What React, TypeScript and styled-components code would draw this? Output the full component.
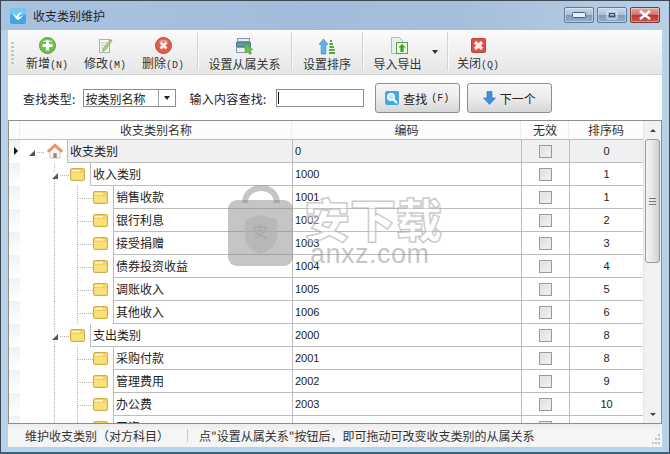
import React from "react";
import styled, { createGlobalStyle } from "styled-components";

const Global = createGlobalStyle`
  html, body { margin: 0; padding: 0; }
  body { font-family: "Noto Sans CJK SC", "Liberation Sans", sans-serif; font-size: 12px; color: #1c1c1c; }
  * { box-sizing: border-box; }
`;

const Win = styled.div`
  width: 670px; height: 454px; display: flex; flex-direction: column; overflow: hidden; position: relative;
  background: #b9d2ea;
  border: 1px solid #3d4a55; border-bottom: 2px solid #2c6a78;
`;
const TitleBar = styled.div`
  height: 29px; flex: none; display: flex; align-items: center; padding: 1px 9px 0 9px; gap: 7px;
  background: linear-gradient(90deg, #a9c3df 0%, #a3bcdb 45%, #a6bfdb 70%, #b9cfe6 100%);
`;
const TitleText = styled.div`
  flex: 1; font-size: 12px; line-height: 16px; color: #20272e;
`;
const Ctrl = styled.div<{ $close?: boolean }>`
  width: 30px; height: 16px; border: 1px solid ${p => p.$close ? "#7c3a36" : "#5f7b99"}; border-radius: 2px; display: flex; align-items: center; justify-content: center;
  background: ${p => p.$close
    ? "linear-gradient(180deg,#e5a79f 0%,#d0736a 48%,#b8382c 52%,#c9584a 100%)"
    : "linear-gradient(180deg,#c4d6ea 0%,#a9c0da 48%,#7f9cbc 52%,#94afcc 100%)"};
  box-shadow: inset 0 0 0 1px rgba(255,255,255,.35);
`;
const Ctrls = styled.div`display: flex; gap: 3px; margin-bottom: 2px;`;

const Body = styled.div`
  flex: 1; min-height: 0; margin: 0 7px 5px; display: flex; flex-direction: column; background: #fff;
`;
const Toolbar = styled.div`
  height: 45px; flex: none; display: flex; align-items: stretch; padding-left: 3px;
  background: linear-gradient(180deg, #fbfbfb 0%, #f0f0f0 50%, #e6e6e6 100%);
  border-bottom: 1px solid #d4d4d4;
`;
const Grip = styled.div`
  width: 3px; margin: 12px 4px 10px 0; flex: none;
  background: repeating-linear-gradient(180deg, #c6c6c6 0 2px, transparent 2px 4px);
`;
const Tool = styled.div<{ $w: number }>`
  width: ${p => p.$w}px; flex: none; display: flex; flex-direction: column; align-items: center; padding-top: 7px; position: relative;
`;
const ToolIcon = styled.div<{ $shift?: number }>`
  height: 18px; display: flex; align-items: center; justify-content: center; margin-right: ${p => p.$shift ?? 0}px;
`;
const ToolLabel = styled.div<{ $shift?: number }>`
  font-size: 12px; line-height: 16px; margin-top: 1px; white-space: nowrap; color: #333; margin-right: ${p => p.$shift ?? 0}px;
`;
const Hot = styled.span`font-family: "Liberation Mono", monospace; font-size: 10px;`;
const Sep = styled.div<{ $ml?: number }>`
  width: 1px; flex: none; margin: 2px 0 4px ${p => p.$ml ?? 0}px; background: #d2d2d2; box-shadow: 1px 0 0 #fafafa;
`;
const Caret = styled.span`
  position: absolute; right: 9px; top: 20px; width: 0; height: 0;
  border-left: 3px solid transparent; border-right: 3px solid transparent; border-top: 4px solid #333;
`;

const Search = styled.div`
  height: 45px; flex: none; display: flex; align-items: center; padding: 1px 0 0 15px; background: #fff;
`;
const Label = styled.div<{ $ml?: number }>`
  font-size: 12px; white-space: nowrap; color: #222; letter-spacing: .25px; margin-left: ${p => p.$ml ?? 0}px;
`;
const Combo = styled.div`
  width: 93px; height: 18px; margin-left: 7px; border: 1px solid #8c8c8c; display: flex; align-items: center; padding-left: 2px; font-size: 12px;
`;
const ComboText = styled.div`flex: 1;`;
const ComboBtn = styled.div`
  width: 17px; height: 16px; border-left: 1px solid #a0a0a0; display: flex; align-items: center; justify-content: center;
  &::after { content: ""; border-left: 3px solid transparent; border-right: 3px solid transparent; border-top: 4px solid #222; }
`;
const Input = styled.div`
  width: 88px; height: 18px; margin-left: 9px; border: 1px solid #8c8c8c; padding: 2px 0 0 1px;
  &::before { content: ""; display: block; width: 1px; height: 12px; background: #111; }
`;
const Btn = styled.div<{ $ml: number }>`
  width: 85px; height: 30px; margin-left: ${p => p.$ml}px; border: 1px solid #8e8e8e; border-radius: 3px; display: flex; align-items: center; justify-content: center; gap: 4px;
  background: linear-gradient(180deg,#f6f6f6 0%,#ececec 50%,#d6d6d6 100%); font-size: 12px; color: #222;
`;

const COLS = "11px 272px 229px 48px 74px";
const Table = styled.div`
  height: 304px; flex: none; display: flex; border: 1px solid #8d8d8d; background: #fff; position: relative; overflow: hidden;
`;
const Grid = styled.div`flex: 1; min-width: 0; overflow: hidden;`;
const Head = styled.div`
  height: 19px; display: grid; grid-template-columns: ${COLS}; border-bottom: 1px solid #bdbdbd;
  background: linear-gradient(180deg,#fff 0%,#fafafa 100%);
`;
const HeadCell = styled.div`
  text-align: center; font-size: 12px; line-height: 17px; color: #333; box-shadow: -1px 0 0 #f0f0f0;
`;
const Row = styled.div`
  height: 23px; display: grid; grid-template-columns: ${COLS};
`;
const Ind = styled.div<{ $on?: boolean }>`
  border-bottom: 1px solid #fff; display: flex; align-items: center; justify-content: center;
  background: linear-gradient(180deg,#f1f1f5 0%,#fff 100%);
  ${p => p.$on ? `&::after { content: ""; border-top: 4px solid transparent; border-bottom: 4px solid transparent; border-left: 4px solid #111; margin-left: 2px; }` : ""}
`;
const NameCell = styled.div`display: flex; position: relative; height: 23px;`;
const Gutter = styled.div<{ $w: number }>`width: ${p => p.$w}px; flex: none; position: relative; background: #fff;`;
const VGuide = styled.i<{ $x: number; $top?: number; $h?: number }>`
  position: absolute; left: ${p => p.$x}px; top: ${p => p.$top ?? 0}px; height: ${p => p.$h ?? 23}px; width: 1px;
  background: repeating-linear-gradient(180deg,#b5b5b5 0 1px,transparent 1px 2px);
`;
const HGuide = styled.i<{ $x: number; $w: number }>`
  position: absolute; left: ${p => p.$x}px; top: 12px; width: ${p => p.$w}px; height: 1px;
  background: repeating-linear-gradient(90deg,#b5b5b5 0 1px,transparent 1px 2px);
`;
const Expander = styled.i<{ $x: number }>`
  position: absolute; left: ${p => p.$x}px; top: 10px; width: 0; height: 0;
  border-bottom: 6px solid #555; border-left: 6px solid transparent;
`;
const NodeIcon = styled.span<{ $x: number }>`position: absolute; left: ${p => p.$x}px; top: 4px; display: flex;`;
const Cell = styled.div<{ $sel?: boolean; $flex?: boolean }>`
  border-left: 1px solid #bdbdbd; border-bottom: 1px solid #bdbdbd; background: ${p => p.$sel ? "#f0eff1" : "#fff"};
  font-size: 12px; line-height: 22px; color: #222; ${p => p.$flex ? "flex: 1;" : ""} padding-left: 2px; overflow: hidden; white-space: nowrap;
`;
const Code = styled(Cell)`font-family: "Liberation Sans", sans-serif; font-size: 11px; line-height: 23px;`;
const Sort = styled(Code)`text-align: center; padding-left: 0;`;
const CheckCell = styled(Cell)`display: flex; align-items: center; justify-content: center; padding-left: 0;`;
const Check = styled.span`
  width: 13px; height: 13px; border: 1px solid #9a9a9a; background: linear-gradient(135deg,#dcdcdc,#f4f4f4); box-shadow: inset 0 0 0 1px #e9e9e9;
`;

const Scroll = styled.div`
  width: 18px; flex: none; display: flex; flex-direction: column; background: #f1f1f1; border-left: 1px solid #e4e4e4;
`;
const ScrollBtn = styled.div<{ $up?: boolean }>`
  height: 18px; flex: none; display: flex; align-items: center; justify-content: center;
  &::after { content: ""; border-left: 3px solid transparent; border-right: 3px solid transparent; ${p => p.$up ? "border-bottom: 3px solid #444;" : "border-top: 3px solid #444;"} }
`;
const Thumb = styled.div`
  height: 124px; flex: none; margin: 0 1px; border: 1px solid #9c9c9c; border-radius: 3px; display: flex; align-items: center; justify-content: center;
  background: linear-gradient(90deg,#f5f5f5 0%,#e6e6e6 50%,#cfcfcf 100%);
  &::after { content: ""; width: 7px; height: 7px; background: repeating-linear-gradient(180deg,#777 0 1px,transparent 1px 3px); }
`;
const Track = styled.div`flex: 1;`;

const Status = styled.div`
  flex: 1; display: flex; align-items: center; padding-left: 17px; position: relative; font-size: 12px; color: #333;
  background: linear-gradient(180deg,#ececec 0%,#f5f5f5 30%,#f5f5f5 100%);
`;
const StatusA = styled.div`width: 162px; flex: none; white-space: nowrap;`;
const StatusDiv = styled.div`width: 1px; height: 13px; background: #c9c9c9; margin-right: 11px;`;
const StatusText = styled.div`white-space: nowrap;`;
const StatusGrip = styled.svg`position: absolute; right: 1px; bottom: 2px;`;

const WM = styled.div`position: absolute; left: 227px; top: 184px; display: flex; gap: 10px; pointer-events: none;`;
const WMText = styled.div`display: flex; flex-direction: column; margin-top: 7px;`;
const WMBig = styled.div`
  font-size: 46px; line-height: 50px; font-weight: 900; color: rgba(255,255,255,.35); -webkit-text-stroke: 1.5px rgba(170,170,170,.6); white-space: nowrap;
`;
const WMSmall = styled.div`
  font-family: "Liberation Sans", sans-serif; font-size: 27px; line-height: 24px; letter-spacing: .5px; color: rgba(140,140,140,.5); padding-left: 6px;
`;
const WMMark = styled.span`
  position: absolute; left: 25px; top: 35px; font-size: 15px; font-weight: 700; color: rgba(170,170,170,.9);
`;
const WMLock = styled.div`position: relative; width: 66px; height: 82px; flex: none;`;

const Plus = () => (
  <svg width="17" height="17" viewBox="0 0 17 17"><circle cx="8.5" cy="8.5" r="8" fill="#6cc24c" stroke="#55a83a"/><path d="M3 5a7 6 0 0 1 11 0z" fill="#b5e5a0"/><path d="M7 3.500h3V7h3.500v3H10v3.500H7V10H3.500V7H7z" fill="#fff"/></svg>
);
const Edit = () => (
  <svg width="15" height="17" viewBox="0 0 15 17"><rect x="1.500" y="2.500" width="10" height="13" fill="#f4f6f4" stroke="#a8b4b4"/><path d="M3 6h6M3 8.500h5M3 11h3" stroke="#c4ccc8"/><path d="M5 12l6-8 2 1.500-6 8-2.500 1z" fill="#a6d076" stroke="#7f9f58" strokeWidth=".6"/><path d="M11.500 3.500l1-1.500 2 1.500-1 1.500z" fill="#e0895e"/></svg>
);
const Del = () => (
  <svg width="17" height="17" viewBox="0 0 17 17"><circle cx="8.500" cy="8.500" r="8" fill="#de5c4c" stroke="#c24a38"/><path d="M3 5a7 6 0 0 1 11 0z" fill="#ee9a8c"/><path d="M5.500 5.500l6 6M11.500 5.500l-6 6" stroke="#fbeeee" strokeWidth="2.800"/></svg>
);
const Sub = () => (
  <svg width="18" height="17" viewBox="0 0 18 17"><rect x="1.500" y=".5" width="12" height="3" fill="#e3ecee" stroke="#7f97a0"/><rect x=".5" y="4.500" width="14" height="4" fill="#5d9aa8" stroke="#54808c"/><rect x=".5" y="9.500" width="14" height="5" fill="#e8f0f2" stroke="#8aa0a8"/><path d="M9 5.500l8 6-3 .5 1.500 3.500-2 1-1.500-3.500-3 2z" fill="#6cc04a" stroke="#4d9c33" strokeWidth=".5"/></svg>
);
const SortI = () => (
  <svg width="16" height="17" viewBox="0 0 16 17"><path d="M4.500 1L9 6.500H6.800V16H2.200V6.500H0z" fill="#5cb4e6" stroke="#2f86ba" strokeWidth=".6"/><path d="M11 2h2v2h-2zM10.500 5h3.500v2h-3.500zM10.500 8h4.500v2h-4.500zM10 11h5.500v2H10zM10 14h6v2h-6z" fill="#5aa53e"/></svg>
);
const Imp = () => (
  <svg width="17" height="18" viewBox="0 0 17 18"><path d="M.5.500h8l3 3v13H.5z" fill="#eaeef4" stroke="#aeb8c6"/><rect x="5.500" y="5.500" width="11" height="11" fill="#e9f7e2" stroke="#5aa53e"/><path d="M11 6.800l3.600 3.700h-2V15H9.400v-4.500h-2z" fill="#46a02f"/></svg>
);
const Close = () => (
  <svg width="15" height="15" viewBox="0 0 15 15"><rect x=".5" y=".5" width="14" height="14" rx="1" fill="#d9534a" stroke="#c04236"/><path d="M4 4l7 7M11 4l-7 7" stroke="#fbeeea" strokeWidth="3.200"/></svg>
);
const Mag = () => (
  <svg width="14" height="14" viewBox="0 0 14 14"><rect width="14" height="14" rx="2" fill="#45a9e0"/><circle cx="6" cy="6" r="3.200" fill="#bfe6f8" stroke="#fff" strokeWidth="1.400"/><path d="M8.500 8.500l3.500 3.500" stroke="#fff" strokeWidth="2"/></svg>
);
const Down = () => (
  <svg width="13" height="14" viewBox="0 0 13 14"><path d="M4 .5h5v6.500h3.500L6.500 13.500.5 7H4z" fill="#3f8fe0" stroke="#2c6fb8" strokeWidth=".6"/></svg>
);
const Folder = () => (
  <svg width="15" height="14" viewBox="0 0 15 14"><rect x=".5" y="1.500" width="14" height="12" rx="1.500" fill="#f4d160" stroke="#d2ae48"/><rect x="2" y="3" width="8" height="1.500" fill="#fff6cf"/><rect x="1.500" y="6" width="12" height="6.500" fill="#f8e07a"/></svg>
);
const Home = () => (
  <svg width="16" height="16" viewBox="0 0 16 16"><path d="M3 8.500L8 4l5 4.500V15H3z" fill="#fbf8f2" stroke="#b8b2a8" strokeWidth=".7"/><path d="M8 .8L.3 7.800l1.400 1.400L8 3.600l6.300 5.600 1.400-1.400z" fill="#ee9a66" stroke="#cf7440" strokeWidth=".6"/><rect x="6.300" y="10" width="3.400" height="5" fill="#8d8f92"/></svg>
);
const Logo = () => (
  <svg width="16" height="16" viewBox="0 0 16 16"><rect width="16" height="16" rx="2" fill="#3fa6e6"/><rect width="16" height="7" rx="2" fill="#74c6f2"/><path d="M3 5c1 4 3 6 5 7 2-1 4-2.500 5-5-2 1.500-3 2-4.500 2 1-1.500 2-3.500 3.500-5-2.500.5-4.500 2-5.500 4C5.500 7.500 4 6.500 3 5z" fill="#fff"/></svg>
);

type R = { level: number; name: string; code: string; sort: string };
const rows: R[] = [
  { level: 0, name: "收支类别", code: "0", sort: "0" },
  { level: 1, name: "收入类别", code: "1000", sort: "1" },
  { level: 2, name: "销售收款", code: "1001", sort: "1" },
  { level: 2, name: "银行利息", code: "1002", sort: "2" },
  { level: 2, name: "接受捐赠", code: "1003", sort: "3" },
  { level: 2, name: "债券投资收益", code: "1004", sort: "4" },
  { level: 2, name: "调账收入", code: "1005", sort: "5" },
  { level: 2, name: "其他收入", code: "1006", sort: "6" },
  { level: 1, name: "支出类别", code: "2000", sort: "8" },
  { level: 2, name: "采购付款", code: "2001", sort: "8" },
  { level: 2, name: "管理费用", code: "2002", sort: "9" },
  { level: 2, name: "办公费", code: "2003", sort: "10" },
  { level: 2, name: "工资", code: "2004", sort: "11" },
];

const TreeGutter = ({ r }: { r: R }) => {
  if (r.level === 0) {
    return (
      <Gutter $w={47}>
        <Expander $x={9} />
        <HGuide $x={17} $w={8} />
        <NodeIcon $x={27} style={{ top: 3 }}><Home /></NodeIcon>
      </Gutter>
    );
  }
  if (r.level === 1) {
    return (
      <Gutter $w={70}>
        <VGuide $x={34} $h={10} />
        <VGuide $x={34} $top={16} $h={7} />
        <Expander $x={32} />
        <HGuide $x={40} $w={9} />
        <NodeIcon $x={50}><Folder /></NodeIcon>
      </Gutter>
    );
  }
  return (
    <Gutter $w={93}>
      <VGuide $x={34} />
      <VGuide $x={57} />
      <HGuide $x={58} $w={15} />
      <NodeIcon $x={73}><Folder /></NodeIcon>
    </Gutter>
  );
};

export default function App() {
  return (
    <Win>
      <Global />
      <TitleBar>
        <Logo />
        <TitleText>收支类别维护</TitleText>
        <Ctrls>
          <Ctrl><svg width="14" height="6"><rect x=".5" y=".5" width="13" height="5" rx="1" fill="#e8eef5" stroke="#4c6078"/></svg></Ctrl>
          <Ctrl><svg width="12" height="10"><rect x="1" y="1" width="10" height="8" rx="1" fill="none" stroke="#e8eef5" strokeWidth="1"/><rect x="3.500" y="3.500" width="5" height="3" fill="none" stroke="#3c5068"/></svg></Ctrl>
          <Ctrl $close><svg width="14" height="10"><path d="M2 1l10 8M12 1L2 9" stroke="#fff" strokeWidth="2.600"/></svg></Ctrl>
        </Ctrls>
      </TitleBar>
      <Body>
        <Toolbar>
          <Grip />
          <Tool $w={58}><ToolIcon><Plus /></ToolIcon><ToolLabel>新增<Hot>(N)</Hot></ToolLabel></Tool>
          <Tool $w={58}><ToolIcon><Edit /></ToolIcon><ToolLabel>修改<Hot>(M)</Hot></ToolLabel></Tool>
          <Tool $w={58}><ToolIcon><Del /></ToolIcon><ToolLabel>删除<Hot>(D)</Hot></ToolLabel></Tool>
          <Sep $ml={5} />
          <Tool $w={93}><ToolIcon><Sub /></ToolIcon><ToolLabel>设置从属关系</ToolLabel></Tool>
          <Sep />
          <Tool $w={70}><ToolIcon><SortI /></ToolIcon><ToolLabel>设置排序</ToolLabel></Tool>
          <Sep />
          <Tool $w={84}>
            <ToolIcon $shift={12}><Imp /></ToolIcon>
            <ToolLabel $shift={15}>导入导出</ToolLabel>
            <Caret />
          </Tool>
          <Sep />
          <Tool $w={60}><ToolIcon><Close /></ToolIcon><ToolLabel>关闭<Hot>(Q)</Hot></ToolLabel></Tool>
        </Toolbar>
        <Search>
          <Label>查找类型:</Label>
          <Combo>
            <ComboText>按类别名称</ComboText>
            <ComboBtn />
          </Combo>
          <Label $ml={14}>输入内容查找:</Label>
          <Input />
          <Btn $ml={11}><Mag />查找<Hot>(F)</Hot></Btn>
          <Btn $ml={7}><Down />下一个</Btn>
        </Search>
        <Table>
          <Grid>
            <Head>
              <HeadCell />
              <HeadCell>收支类别名称</HeadCell>
              <HeadCell>编码</HeadCell>
              <HeadCell>无效</HeadCell>
              <HeadCell>排序码</HeadCell>
            </Head>
            {rows.map((r, i) => (
              <Row key={r.code}>
                <Ind $on={i === 0} />
                <NameCell>
                  <TreeGutter r={r} />
                  <Cell $flex $sel={i === 0}>{r.name}</Cell>
                </NameCell>
                <Code $sel={i === 0}>{r.code}</Code>
                <CheckCell $sel={i === 0}><Check /></CheckCell>
                <Sort $sel={i === 0}>{r.sort}</Sort>
              </Row>
            ))}
          </Grid>
          <Scroll>
            <ScrollBtn $up />
            <Thumb />
            <Track />
            <ScrollBtn />
          </Scroll>
        </Table>
        <Status>
          <StatusA>维护收支类别（对方科目）</StatusA>
          <StatusDiv />
          <StatusText>点"设置从属关系"按钮后，即可拖动可改变收支类别的从属关系</StatusText>
          <StatusGrip width="12" height="12" viewBox="0 0 12 12">
            <path d="M9 1h2v2H9zM6 5h2v2H6zM9 5h2v2H9zM3 9h2v2H3zM6 9h2v2H6zM9 9h2v2H9z" fill="#c4c4c4" />
          </StatusGrip>
        </Status>
      </Body>
      <WM>
        <WMLock>
          <svg width="66" height="82" viewBox="0 0 66 82">
            <path d="M17 18c0-20 32-20 32 0" fill="none" stroke="rgba(140,140,140,.5)" strokeWidth="6" />
            <rect x="0" y="15" width="65" height="66" rx="9" fill="rgba(140,140,140,.5)" />
            <path d="M33 30l16 5v16c0 10-8 15-16 18-8-3-16-8-16-18V35z" fill="rgba(175,175,175,.6)" />
          </svg>
          <WMMark>安</WMMark>
        </WMLock>
        <WMText>
          <WMBig>安下载</WMBig>
          <WMSmall>anxz.com</WMSmall>
        </WMText>
      </WM>
    </Win>
  );
}
